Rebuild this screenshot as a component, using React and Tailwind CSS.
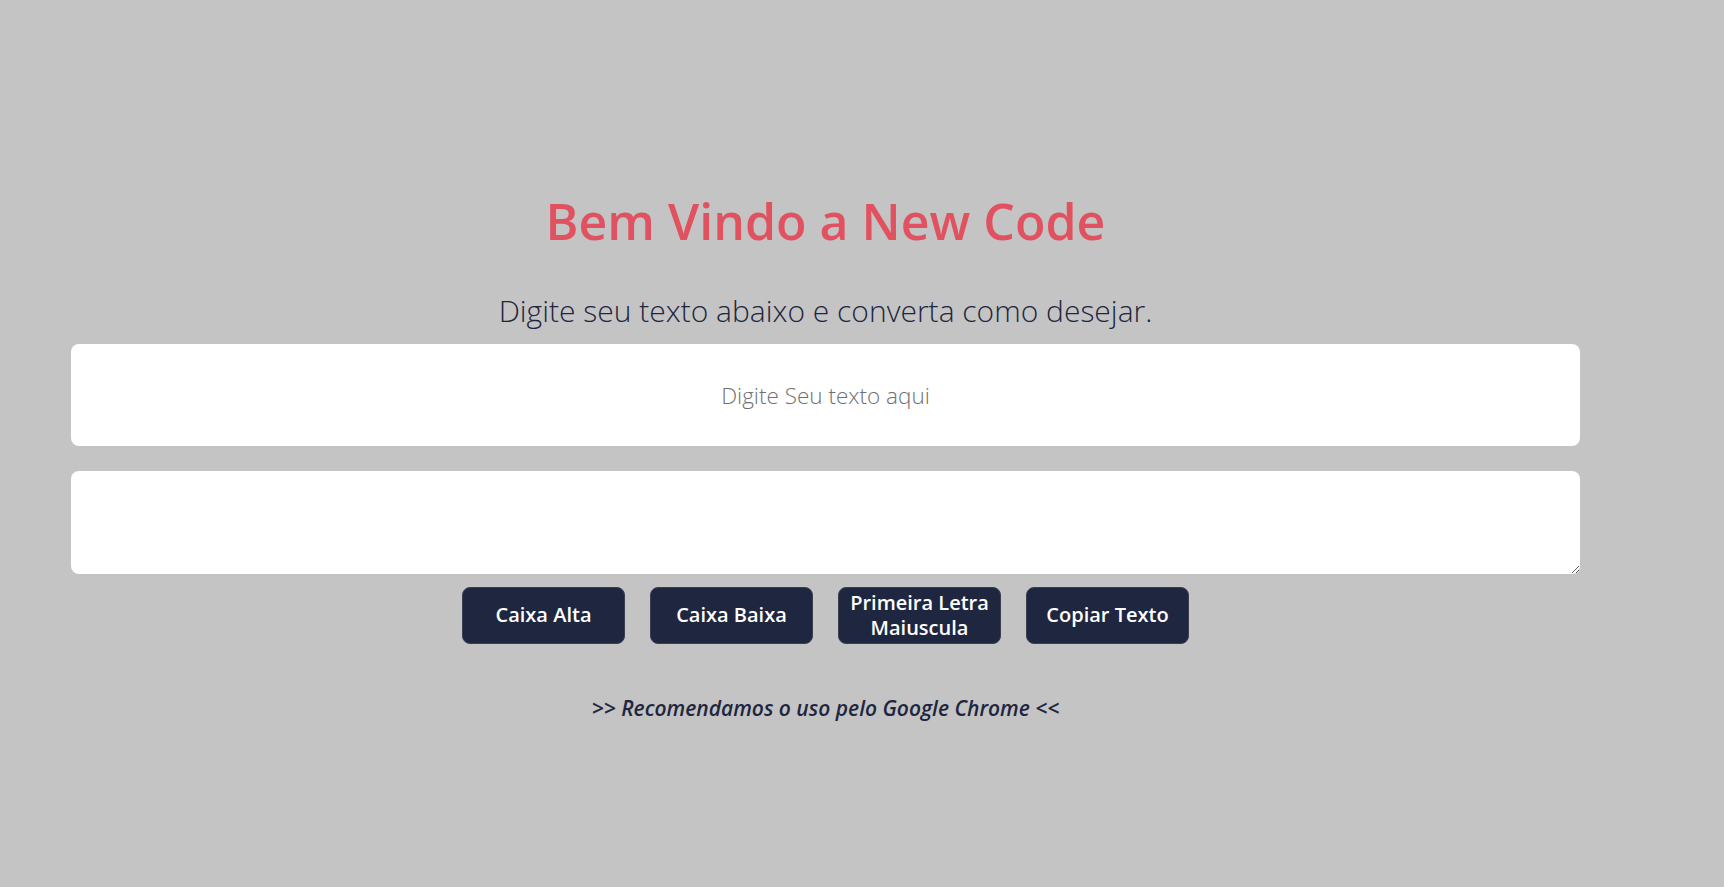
export default function App() {
  const buttons = ["Caixa Alta", "Caixa Baixa", "Primeira Letra Maiuscula", "Copiar Texto"];

  return (
    <div className="min-h-screen bg-[#c4c4c4] font-['Open_Sans',sans-serif] overflow-hidden">
      <main className="ml-[71px] w-[1509px] pt-[187px] flex flex-col items-center">
        <h1 className="text-[50px] leading-[68px] font-semibold text-[#e05260]">
          Bem Vindo a New Code
        </h1>

        <p className="mt-[35px] text-[30px] leading-[41px] font-light text-[#1f2640]">
          Digite seu texto abaixo e converta como desejar.
        </p>

        <input
          type="text"
          placeholder="Digite Seu texto aqui"
          className="mt-[13px] w-full h-[102px] rounded-lg bg-white text-center text-[22.5px] font-light text-[#1f2640] placeholder:text-[#707070] outline-none"
        />

        <textarea className="mt-[25px] block w-full h-[103px] rounded-lg bg-white p-3 text-[20px] text-[#1f2640] outline-none" />

        <div className="mt-[13px] flex gap-[25px]">
          {buttons.map((label) => (
            <button
              key={label}
              className="w-[163px] h-[57px] rounded-lg bg-[#1f2740] border border-[#3a3f52] px-2 pb-[2px] text-[20px] leading-[25px] font-semibold text-white"
            >
              {label}
            </button>
          ))}
        </div>

        <p className="mt-[50px] text-[21px] leading-[29px] italic font-semibold text-[#1f2640]">
          &gt;&gt; Recomendamos o uso pelo Google Chrome &lt;&lt;
        </p>
      </main>
    </div>
  );
}
